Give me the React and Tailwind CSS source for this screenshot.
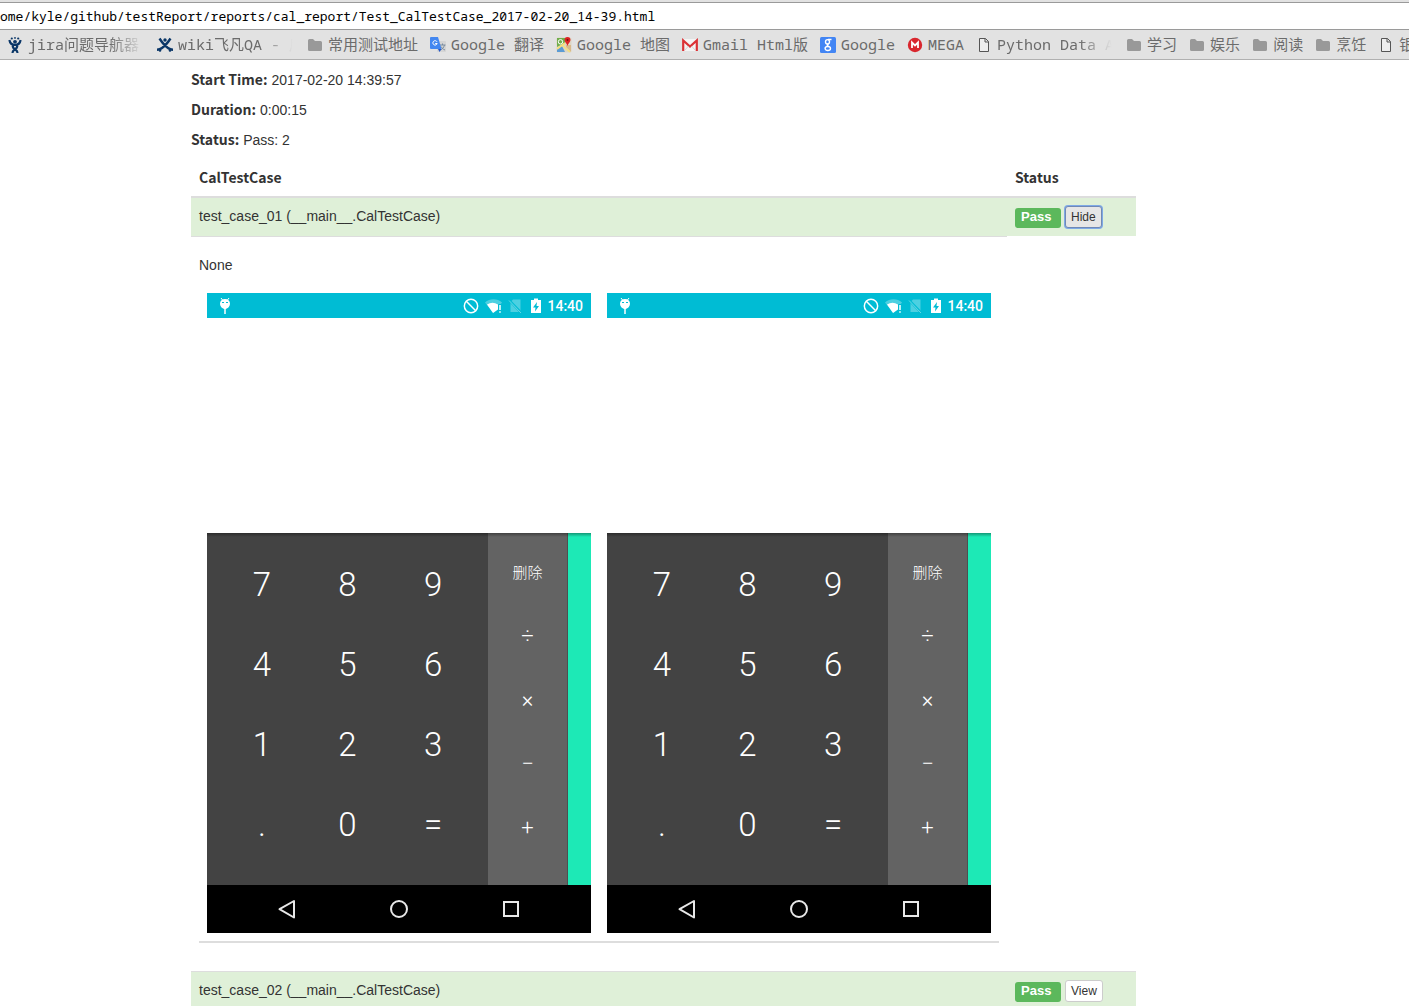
import { useState } from "react";
import { Ban } from "lucide-react";

const DIGITS = ["7", "8", "9", "4", "5", "6", "1", "2", "3", ".", "0", "="];
const OPERATORS = ["删除", "÷", "×", "−", "+"];

const BOOKMARKS = [
  { title: "jira问题导航器", icon: JiraIcon, fade: true },
  { title: "wiki飞凡QA - 后", icon: WikiIcon, fade: true },
  { title: "常用测试地址", icon: FolderIcon },
  { title: "Google 翻译", icon: TranslateIcon },
  { title: "Google 地图", icon: MapsIcon },
  { title: "Gmail Html版", icon: GmailIcon },
  { title: "Google", icon: GoogleIcon },
  { title: "MEGA", icon: MegaIcon },
  { title: "Python Data A", icon: PageIcon, fade: true },
  { title: "学习", icon: FolderIcon },
  { title: "娱乐", icon: FolderIcon },
  { title: "阅读", icon: FolderIcon },
  { title: "烹饪", icon: FolderIcon },
  { title: "银", icon: PageIcon },
];

function Icon({ children }) {
  return (
    <svg viewBox="0 0 16 16" className="size-4 shrink-0" aria-hidden="true">
      {children}
    </svg>
  );
}

function JiraIcon() {
  return (
    <Icon>
      <g fill="#0b3768">
        <circle cx="4.800" cy="1.500" r="1.100" />
        <circle cx="8" cy="0.900" r="0.900" />
        <circle cx="11.200" cy="1.500" r="1.100" />
        <circle cx="8" cy="4.800" r="1.900" />
      </g>
      <path
        d="M2.400 3C3 6.500 5 8 8 8s5-1.500 5.600-5M5.500 7.500c.2 3.300 1 4.500 2.800 5.200 1.400.6 2 1.300 2.300 3.300M10.500 7.500c-.2 3.300-1 4.500-2.800 5.200-1.400.6-2 1.300-2.300 3.300"
        fill="none"
        stroke="#0b3768"
        strokeWidth="2.200"
      />
    </Icon>
  );
}

function WikiIcon() {
  return (
    <Icon>
      <path
        d="M2.500 1.500C4.500 4.500 8 9 11 11c1.500 1.200 3 1.700 5 1.700M13.500 1.500C11.500 4.500 8 9 5 11c-1.500 1.200-3 1.700-5 1.700"
        fill="none"
        stroke="#0b3768"
        strokeWidth="2.400"
      />
      <g fill="#0b3768">
        <circle cx="8" cy="3" r="1.700" />
        <circle cx="3" cy="13.500" r="1.300" />
        <circle cx="13" cy="13.500" r="1.300" />
      </g>
    </Icon>
  );
}

function FolderIcon() {
  return (
    <Icon>
      <path d="M1 3.500A1.500 1.500 0 0 1 2.500 2H6l2 2h5.500A1.500 1.500 0 0 1 15 5.500v7a1.500 1.500 0 0 1-1.500 1.500h-11A1.500 1.500 0 0 1 1 12.500z" fill="#999" />
    </Icon>
  );
}

function PageIcon() {
  return (
    <Icon>
      <path d="M3.500 1.500h6l3 3v10h-9zM9 1.500V5h3.500" fill="#eee" stroke="#555" />
    </Icon>
  );
}

function TranslateIcon() {
  return (
    <Icon>
      <rect x="7" y="4" width="9" height="11" rx="1" fill="#d5d5d5" />
      <path d="M9.500 8h6M12.500 6.500V8M14.500 8c-.8 2.600-2 4-4 5M11 9.500c1 1.800 2 2.700 4 3.500" fill="none" stroke="#7a8da0" />
      <path d="M1 0h7l3.500 12H1a1 1 0 0 1-1-1V1a1 1 0 0 1 1-1z" fill="#4387f0" />
      <path d="M8 12h3.500L9.500 15z" fill="#2356c7" />
      <path d="M7 4.800A2.200 2.200 0 1 0 7.200 6.500H5.200" fill="none" stroke="#fff" />
    </Icon>
  );
}

function MapsIcon() {
  return (
    <Icon>
      <rect x="0.500" y="0.500" width="15" height="15" rx="1.500" fill="#ddd6c4" />
      <path d="M1 1h8v5L1 10z" fill="#71ad4d" />
      <path d="M10 8h5v7l-5-5z" fill="#d9b98a" />
      <path d="M1 12l5-3 3 6H1z" fill="#5b9bd5" />
      <path d="M1 12l8-6M6 8l8 7" fill="none" stroke="#f6e07a" strokeWidth="1.600" />
      <circle cx="4.500" cy="4.800" r="2.200" fill="none" stroke="#fff" />
      <path d="M11.500 0a3 3 0 0 1 3 3c0 2-2.200 3-3 6-.8-3-3-4-3-6a3 3 0 0 1 3-3z" fill="#dc2424" />
      <circle cx="11.500" cy="3" r="1" fill="#7c1010" />
    </Icon>
  );
}

function GmailIcon() {
  return (
    <Icon>
      <rect x="0" y="2" width="16" height="12" rx="1" fill="#f4f4f4" />
      <path d="M1.200 14V3.500L8 9.500l6.800-6V14" fill="none" stroke="#db3236" strokeWidth="2.200" />
      <path d="M3 13l3.500-4M13 13L9.500 9" stroke="#ccc" strokeWidth="0.800" />
    </Icon>
  );
}

function GoogleIcon() {
  return (
    <Icon>
      <rect width="16" height="16" rx="1.500" fill="#4285f4" />
      <g fill="none" stroke="#fff" strokeWidth="1.400">
        <ellipse cx="7.500" cy="4.800" rx="2" ry="2.200" />
        <path d="M8 2.500h3.500M8.800 6.800c-2.300.8-2 1.600-.3 2.400" />
        <ellipse cx="7.800" cy="11.500" rx="2.700" ry="2" />
      </g>
    </Icon>
  );
}

function MegaIcon() {
  return (
    <Icon>
      <circle cx="8" cy="8" r="7.200" fill="#d9272e" />
      <path d="M5 11V5.500l3 3 3-3V11" fill="none" stroke="#fff" strokeWidth="1.800" />
    </Icon>
  );
}

function BrowserBar() {
  return (
    <header className="border-b border-[#b0b0b0] bg-[#e2e2e2] pt-0.5">
      <input
        type="text"
        aria-label="Address"
        defaultValue="ome/kyle/github/testReport/reports/cal_report/Test_CalTestCase_2017-02-20_14-39.html"
        className="block h-7 w-full border-y border-[#9a9a9a] bg-white font-['Noto_Sans_Mono','DejaVu_Sans_Mono','Noto_Sans_CJK_SC',monospace] text-[13px] text-black outline-none"
      />
      <nav className="flex h-[29px] items-center gap-3 overflow-hidden pl-[7px] font-['Noto_Sans_Mono','DejaVu_Sans_Mono','Noto_Sans_CJK_SC',monospace] text-[15px] text-[#6b6b6b]">
        {BOOKMARKS.map(({ title, icon: BookmarkIcon, fade }) => (
          <a key={title} href="#" className="flex shrink-0 items-center gap-[5px]">
            <BookmarkIcon />
            <span
              className={
                fade
                  ? "w-[117px] overflow-hidden whitespace-nowrap mask-r-from-70% mask-r-to-98%"
                  : "whitespace-nowrap"
              }
            >
              {title}
            </span>
          </a>
        ))}
      </nav>
    </header>
  );
}

function PhoneStatusBar() {
  return (
    <div className="flex h-[25px] items-center bg-[#00bcd4] pr-2 pl-2.5 text-white">
      <svg viewBox="0 0 16 16" className="size-4" aria-hidden="true">
        <path d="M4 0l1.500 2M12 0l-1.500 2" stroke="#fff" />
        <path d="M3 5.500a5 4.500 0 0 1 10 0c0 3-2.500 5.500-5 5.500S3 8.500 3 5.500z" fill="#fff" />
        <path d="M8 11v5" stroke="#fff" strokeWidth="1.500" />
        <path d="M5 4.500h2M9 4.500h2" stroke="#00bcd4" />
      </svg>
      <div className="ml-auto flex items-center">
        <Ban size={16} strokeWidth={2.2} />
        <svg viewBox="0 0 18 16" className="ml-1.5 h-4 w-[18px]" aria-hidden="true">
          <path d="M0 4.500a13 13 0 0 1 17 0L15 7H12v4l-3.500 4z" fill="#fff" opacity="0.300" />
          <path d="M2 6.500a10 10 0 0 1 11 0v5L8 15z" fill="#fff" />
          <path d="M15 6v6.500M15 13.500v1.500" stroke="#00bcd4" strokeWidth="3.500" />
          <path d="M15 7v5M15 13.200v1.600" stroke="#fff" strokeWidth="1.500" />
        </svg>
        <svg viewBox="0 0 14 16" className="ml-[5px] h-4 w-3.5" aria-hidden="true">
          <path d="M5 1.500h7.500V14H2.500V4z" fill="#fff" opacity="0.300" />
          <path d="M1 2l12 12.500" stroke="#00bcd4" strokeWidth="2.500" />
          <path d="M1 2.500l12 12.500" stroke="#fff" opacity="0.400" />
        </svg>
        <svg viewBox="0 0 10 16" className="ml-[9px] h-4 w-2.5" aria-hidden="true">
          <path d="M3 0.500h4v1.500h3V15H0V2h3z" fill="#fff" />
          <path d="M6 4L2 9.500h2.500L4 13.500 8 8H5.500z" fill="#00bcd4" />
        </svg>
        <span className="ml-1.5 font-[Roboto,sans-serif] text-sm font-medium">14:40</span>
      </div>
    </div>
  );
}

function CalculatorShot() {
  return (
    <div className="w-96 shrink-0">
      <PhoneStatusBar />
      <div className="h-[215px] bg-white" />
      <div className="relative flex h-[352px] font-[Roboto,'Noto_Sans_CJK_SC',sans-serif] text-white">
        <div className="grid flex-1 auto-rows-[80px] grid-cols-3 bg-[#434343] px-3 pt-3 text-[33px] font-light">
          {DIGITS.map((digit) => (
            <button key={digit} type="button">
              {digit}
            </button>
          ))}
        </div>
        <div className="grid w-20 auto-rows-[64px] border-r border-r-[#4f4f4f] bg-[#636363] pt-[7px] text-[22px] font-light">
          {OPERATORS.map((op) => (
            <button key={op} type="button" className="first:pt-1 first:text-[15px]">
              {op}
            </button>
          ))}
        </div>
        <div className="w-[23px] bg-[#1de9b6]" />
        <div className="pointer-events-none absolute inset-x-0 top-0 h-1 bg-linear-to-b from-black/35 to-transparent" />
      </div>
      <div className="flex h-12 items-center justify-center gap-[88px] bg-black">
        <svg viewBox="0 0 24 24" className="size-6" fill="none" stroke="#e8e8e8" strokeWidth="2" aria-hidden="true">
          <path d="M19 4v16.500L4.500 12.200z" strokeLinejoin="round" />
        </svg>
        <svg viewBox="0 0 24 24" className="size-6" fill="none" stroke="#e8e8e8" strokeWidth="2" aria-hidden="true">
          <circle cx="12" cy="12" r="8" />
        </svg>
        <svg viewBox="0 0 24 24" className="size-6" fill="none" stroke="#e8e8e8" strokeWidth="2" aria-hidden="true">
          <rect x="5" y="5" width="14" height="14" />
        </svg>
      </div>
    </div>
  );
}

function TestRow({ name, open, onToggle }) {
  return (
    <tr className="bg-[#dff0d8]">
      <td className={open ? "px-2 pt-2 pb-2.5" : "border-t border-[#ddd] px-2 pt-2 pb-2.5"}>{name}</td>
      <td className={open ? "p-2" : "border-t border-[#ddd] p-2"}>
        <div className="flex h-[22px] items-center gap-1">
          <span className="mt-0.5 h-5 w-[46px] rounded-[3px] bg-[#5cb85c] pl-1.5 text-[13px] leading-[18px] font-bold text-white">
            Pass
          </span>
          <button
            type="button"
            onClick={onToggle}
            className={
              open
                ? "h-[22px] rounded-[3px] border border-[#7089b5] bg-[#e6e6e6] px-[5px] text-xs ring-1 ring-[#7fa9e6]"
                : "h-[22px] rounded-[3px] border border-[#ccc] bg-white px-[5px] text-xs"
            }
          >
            {open ? "Hide" : "View"}
          </button>
        </div>
      </td>
    </tr>
  );
}

function DetailRow() {
  return (
    <tr>
      <td className="border-t border-[#ddd] p-2">
        <p className="mt-2.5">None</p>
        <div className="mt-[18px] flex gap-4 px-2">
          <CalculatorShot />
          <CalculatorShot />
        </div>
        <hr className="mt-2 mb-5 border-t-2 border-[#ddd]" />
      </td>
      <td />
    </tr>
  );
}

function SummaryLine({ label, children }) {
  return (
    <p className="flex h-5 gap-1">
      <strong className="font-['Noto_Sans_CJK_SC',sans-serif] leading-[18px]">{label}:</strong>
      <span>{children}</span>
    </p>
  );
}

export default function App() {
  const [open, setOpen] = useState({ test_case_01: true, test_case_02: false });

  const toggle = (id) => setOpen((prev) => ({ ...prev, [id]: !prev[id] }));

  return (
    <div className="h-screen overflow-hidden bg-white">
      <BrowserBar />
      <main className="ml-[191px] max-w-[945px] pt-2.5 font-['Liberation_Sans',sans-serif] text-sm text-[#333]">
        <div className="space-y-2.5">
          <SummaryLine label="Start Time">2017-02-20 14:39:57</SummaryLine>
          <SummaryLine label="Duration">0:00:15</SummaryLine>
          <SummaryLine label="Status">Pass: 2</SummaryLine>
        </div>
        <table className="mt-2.5 w-full border-separate border-spacing-0">
          <thead>
            <tr className="text-left font-['Noto_Sans_CJK_SC',sans-serif]">
              <th className="border-b-2 border-[#ddd] px-2 pt-[7px] pb-[9px]">CalTestCase</th>
              <th className="w-[129px] border-b-2 border-[#ddd] px-2 pt-[7px] pb-[9px]">Status</th>
            </tr>
          </thead>
          <tbody>
            {Object.keys(open).map((id) => [
              <TestRow
                key={id}
                name={`${id} (__main__.CalTestCase)`}
                open={open[id]}
                onToggle={() => toggle(id)}
              />,
              open[id] && <DetailRow key={`${id}-detail`} />,
            ])}
          </tbody>
        </table>
      </main>
    </div>
  );
}
